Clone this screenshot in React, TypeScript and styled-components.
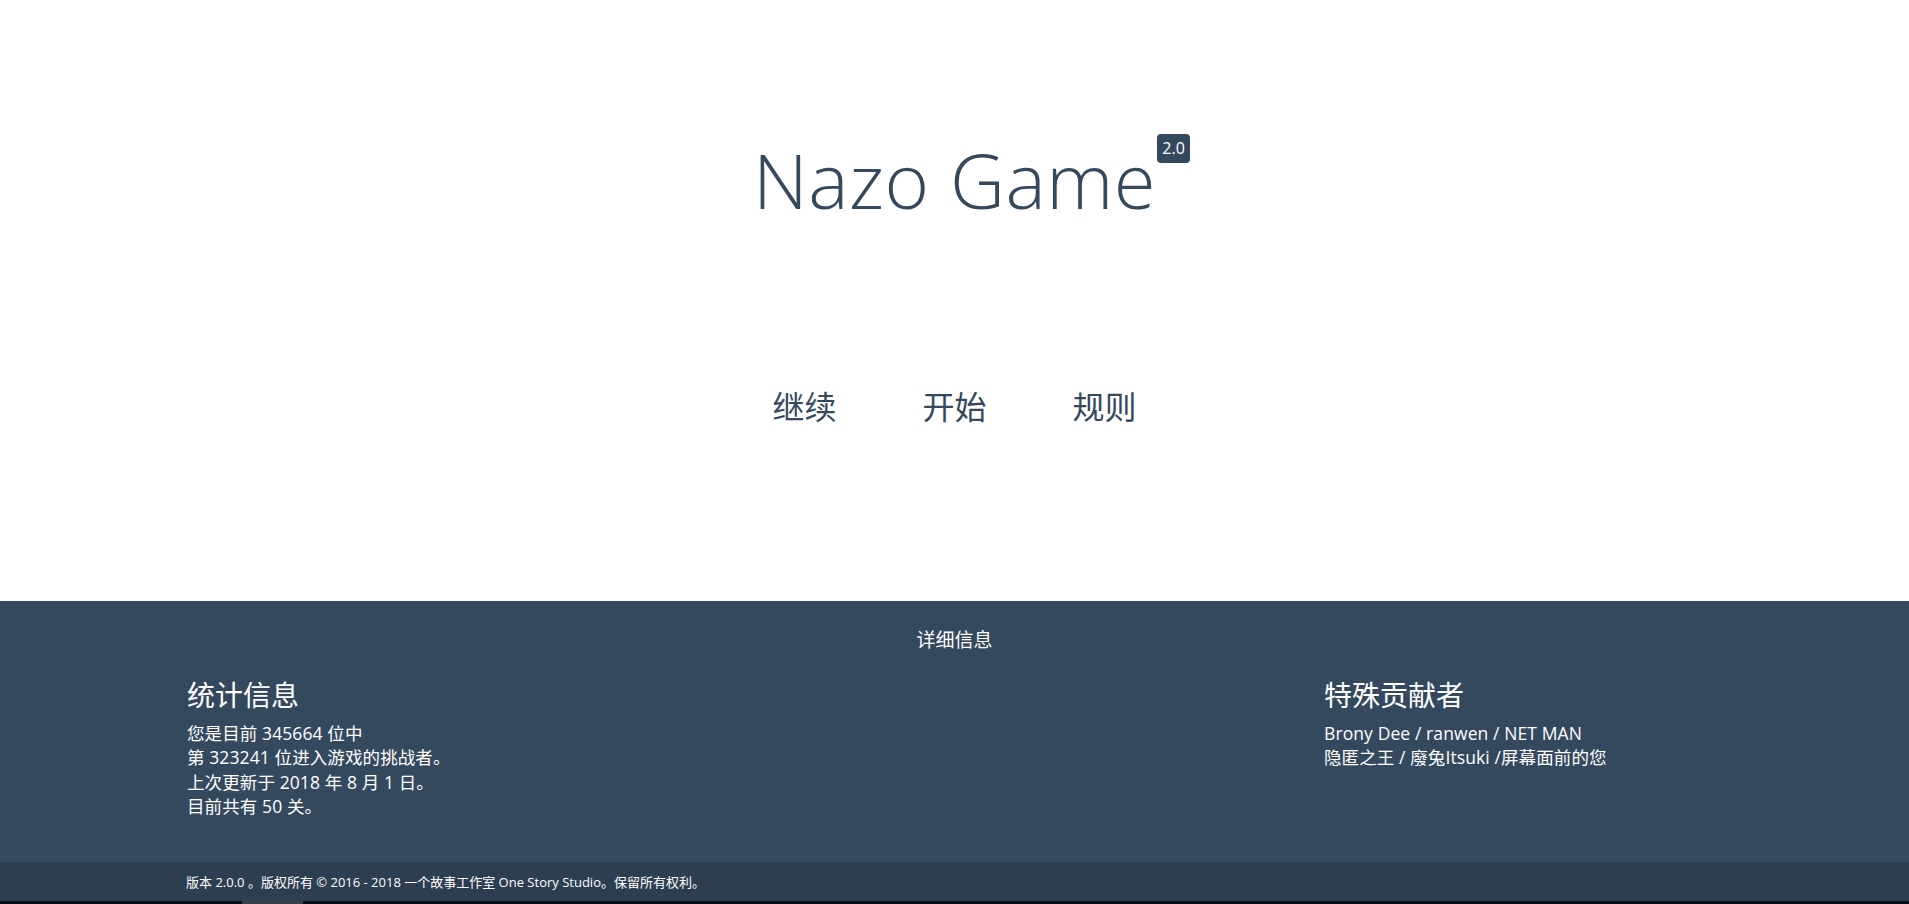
import React from "react";
import styled, { createGlobalStyle } from "styled-components";

const Global = createGlobalStyle`
  html, body { margin: 0; padding: 0; background: #fff; }
  body { font-family: "Segoe UI", "Open Sans", "Noto Sans CJK SC", sans-serif; overflow: hidden; }
  * { box-sizing: border-box; }
`;

const Page = styled.div`
  display: flex;
  flex-direction: column;
  width: 1909px;
  height: 904px;
`;

const Hero = styled.header`
  height: 601px;
  display: flex;
  flex-direction: column;
  align-items: center;
  padding-top: 130px;
  color: #34495e;
`;

const TitleWrap = styled.div`
  position: relative;
`;

const Title = styled.h1`
  margin: 0;
  font-family: "Open Sans", "Noto Sans CJK SC", sans-serif;
  font-weight: 300;
  font-size: 76px;
  line-height: 100px;
  letter-spacing: 0.5px;
  color: #34495e;
`;

const Badge = styled.span`
  position: absolute;
  top: 4px;
  right: -34px;
  width: 33px;
  height: 29px;
  border-radius: 4px;
  background: #34495e;
  color: #fff;
  font-family: "Open Sans", sans-serif;
  font-size: 16px;
  line-height: 29px;
  text-align: center;
`;

const Nav = styled.nav`
  display: flex;
  gap: 86px;
  margin-top: 155px;
`;

const NavLink = styled.a`
  font-family: "Noto Sans CJK SC", sans-serif;
  font-size: 32px;
  line-height: 40px;
  color: #34495e;
  text-decoration: none;
  cursor: pointer;
`;

const Info = styled.section`
  height: 261px;
  background: #34495e;
  color: #fff;
  padding: 24px 187px 0;
`;

const InfoTitle = styled.div`
  text-align: center;
  font-family: "Noto Sans CJK SC", sans-serif;
  font-size: 19px;
  line-height: 28px;
`;

const Columns = styled.div`
  display: grid;
  grid-template-columns: 1fr 398px;
  margin-top: 22px;
`;

const ColTitle = styled.h3`
  margin: 0 0 8px;
  font-family: "Noto Sans CJK SC", sans-serif;
  font-weight: 400;
  font-size: 28px;
  line-height: 38px;
`;

const Line = styled.div`
  font-family: "Segoe UI", "Open Sans", "Noto Sans CJK SC", sans-serif;
  font-size: 17.5px;
  line-height: 24.3px;
  letter-spacing: 0.1px;
  white-space: nowrap;
`;

const Bottom = styled.footer`
  height: 39px;
  background: #2c3e50;
  color: #fff;
  padding: 0 186px;
  display: flex;
  align-items: center;
  font-size: 13px;
  font-family: "Segoe UI", "Open Sans", "Noto Sans CJK SC", sans-serif;
`;

const Strip = styled.div`
  height: 3px;
  background: #0b0e13;
  position: relative;
`;

const Thumb = styled.div`
  position: absolute;
  left: 242px;
  top: 0;
  width: 61px;
  height: 3px;
  background: #3b3d42;
`;

export default function App() {
  return (
    <Page>
      <Global />
      <Hero>
        <TitleWrap>
          <Title>Nazo Game</Title>
          <Badge>2.0</Badge>
        </TitleWrap>
        <Nav>
          <NavLink>继续</NavLink>
          <NavLink>开始</NavLink>
          <NavLink>规则</NavLink>
        </Nav>
      </Hero>
      <Info>
        <InfoTitle>详细信息</InfoTitle>
        <Columns>
          <div>
            <ColTitle>统计信息</ColTitle>
            <Line>您是目前 345664 位中</Line>
            <Line>第 323241 位进入游戏的挑战者。</Line>
            <Line>上次更新于 2018 年 8 月 1 日。</Line>
            <Line>目前共有 50 关。</Line>
          </div>
          <div>
            <ColTitle>特殊贡献者</ColTitle>
            <Line>Brony Dee / ranwen / NET MAN</Line>
            <Line>隐匿之王 / 廢兔Itsuki /屏幕面前的您</Line>
          </div>
        </Columns>
      </Info>
      <Bottom>版本 2.0.0 。版权所有 © 2016 - 2018 一个故事工作室 One Story Studio。保留所有权利。</Bottom>
      <Strip>
        <Thumb />
      </Strip>
    </Page>
  );
}
